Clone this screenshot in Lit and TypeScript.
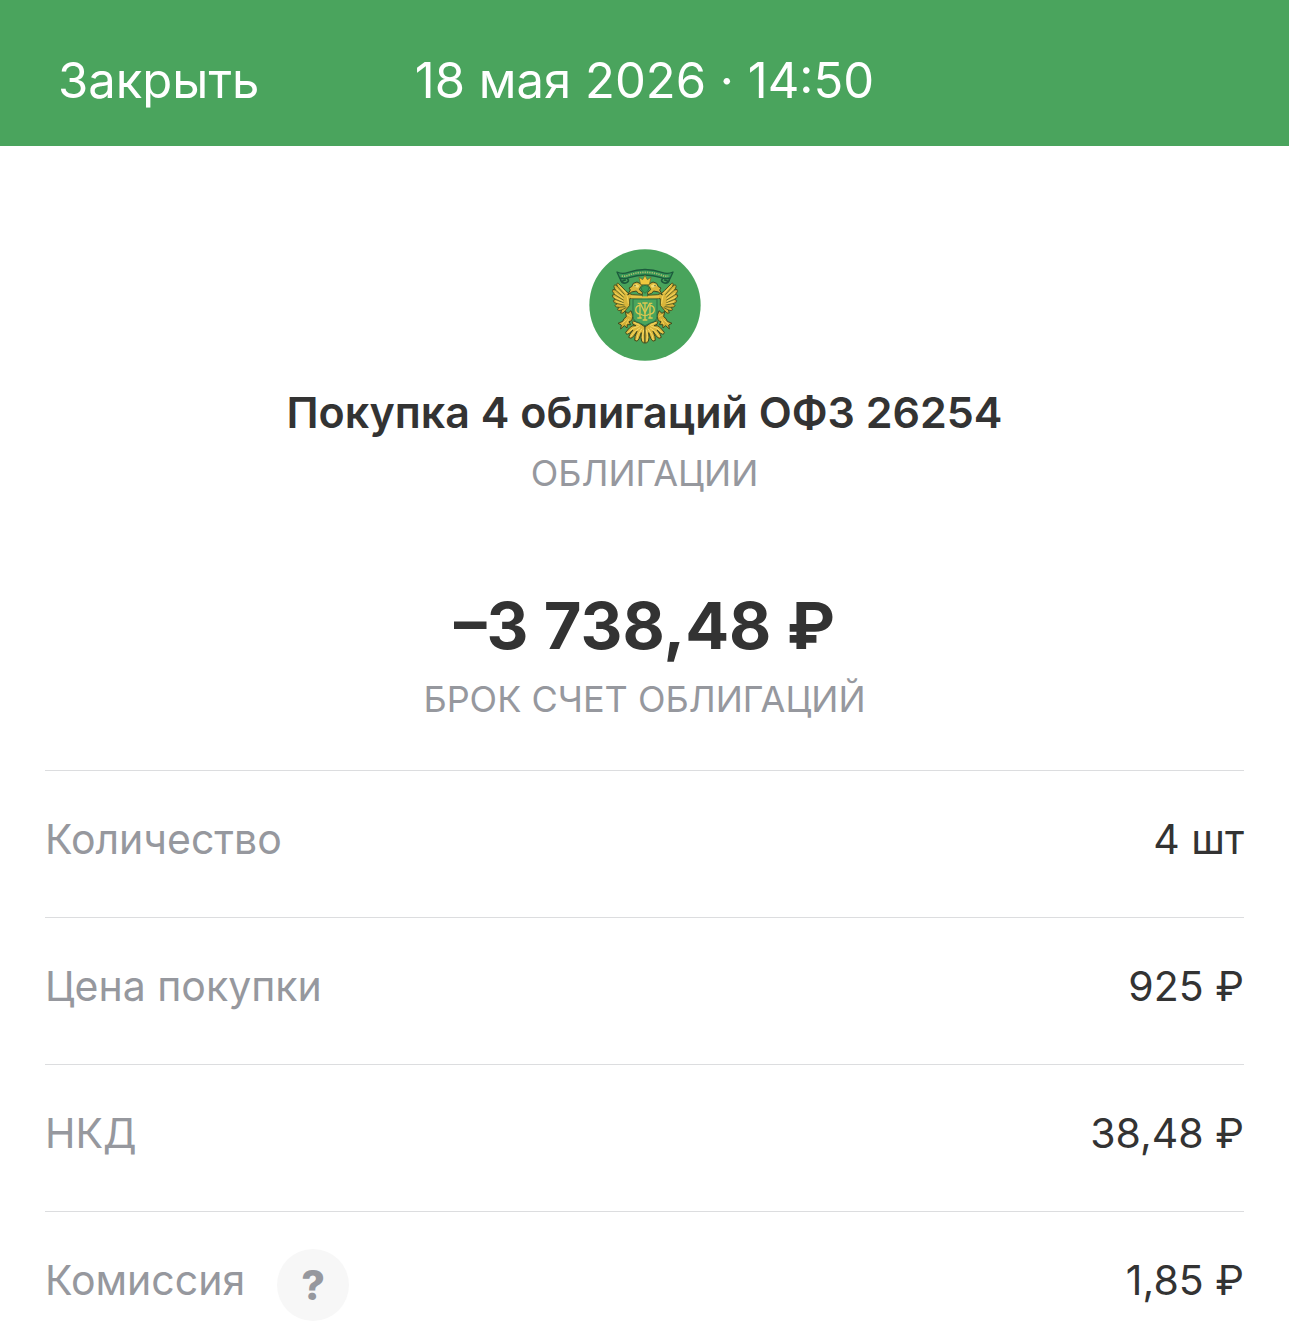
import { LitElement, html, css, svg } from 'lit';
import { customElement, property, state } from 'lit/decorators.js';

interface Detail {
  label: string;
  value: string;
  help?: boolean;
}

// left half of the eagle, mirrored for the right one
const half = svg`
  <path fill="#d9b53a" stroke="#4a5420" stroke-width="3" stroke-linejoin="round"
    d="M172 150 L142 148 Q130 146 122 136 L100 114 Q92 112 97 123 L90 118 Q83 121 91 134 L84 132 Q79 138 89 148 L82 149 Q80 156 91 162 L85 166 Q85 173 96 175 L90 181 Q92 187 102 186 L97 193 Q101 198 110 194 L107 203 Q114 207 121 196 L134 180 L134 160 L172 158 Z"/>
  <path fill="none" stroke="#4f5a22" stroke-width="2.5" stroke-linecap="round"
    d="M97 123 L118 147 M91 134 L115 155 M89 148 L115 164 M91 162 L115 172 M96 175 L117 179 M102 186 L120 184 M110 194 L123 187"/>
  <path fill="none" stroke="#f3d75f" stroke-width="3" stroke-linecap="round"
    d="M103 121 L123 144 M95 131 L116 150 M91 144 L114 159 M90 156 L113 167 M94 169 L115 175 M126 150 L130 174 M140 153 H170"/>
  <path fill="#dcb83c" stroke="#3e4a20" stroke-width="3" stroke-linejoin="round"
    d="M172 148 L160 144 L154 137 L140 140 L128 149 L136 134 L132 128 L140 124 L145 114 L156 110 L168 116 L174 126 L166 126 L163 133 L172 141 Z"/>
  <path fill="#f4dc70" d="M144 120 l10 -4 l9 5 l-4 6 l-9 -2 z"/>
  <circle cx="150" cy="121" r="2" fill="#2c4a2a"/>
  <path fill="#d3ae35" stroke="#3e4a20" stroke-width="3" stroke-linejoin="round"
    d="M121 198 L129 204 L138 196 L144 212 L140 226 L132 229 L137 238 L127 238 L126 248 L118 241 L107 251 L109 239 L99 234 L113 228 L117 220 L124 214 Z"/>
  <path fill="none" stroke="#f0d25a" stroke-width="3" stroke-linecap="round"
    d="M127 208 L136 213 M126 222 L110 236 M132 221 L124 236"/>
  <path fill="#d9b53a" stroke="#3e4a20" stroke-width="3" stroke-linejoin="round"
    d="M180 245 L163 233 L146 227 Q138 229 144 237 L153 241 Q140 239 133 248 L122 261 Q123 270 133 264 L144 254 Q132 268 131 276 Q137 283 145 274 L156 258 Q148 274 149 285 Q157 292 162 281 L169 262 Q166 278 170 288 Q175 294 180 293 Z"/>
  <path fill="none" stroke="#f5dc68" stroke-width="3" stroke-linecap="round"
    d="M148 232 L164 240 M160 243 Q144 244 128 262 M164 248 Q145 258 137 274 M170 251 Q156 268 155 283 M176 254 Q170 270 174 286"/>
`;

@customElement('bond-emblem')
export class BondEmblem extends LitElement {
  render() {
    return html`
      <svg viewBox="12 11 336 336" role="img" aria-label="ОФЗ">
        <circle cx="180" cy="179" r="167" fill="#49a45c" />
        <g>${half}</g>
        <g transform="translate(360 0) scale(-1 1)">${half}</g>
        <path fill="#359657" stroke="#1c5a3c" stroke-width="4" stroke-linejoin="round"
          d="M96 80 Q112 88 130 81 Q180 64 230 81 Q248 88 264 80 L256 98 Q242 103 228 97 Q180 81 132 97 Q118 103 104 98 Z" />
        <path fill="none" stroke="#1c5a3c" stroke-width="5" stroke-linecap="round"
          d="M106 100 Q108 115 122 113 Q135 108 128 101 M254 100 Q252 115 238 113 Q225 108 232 101 M113 107 L121 104 M247 107 L239 104" />
        <path fill="none" stroke="#a8bd6d" stroke-width="5" stroke-dasharray="4 3"
          d="M110 92 Q122 94 134 88 Q180 74 226 88 Q238 94 250 92" />
        <path fill="#f0c83e" stroke="#6b6424" stroke-width="2" stroke-linejoin="round"
          d="M167 118 L162 96 L173 103 L180 90 L187 103 L198 96 L193 118 Z" />
        <path fill="#3a9b55" stroke="#28603a" stroke-width="2"
          d="M167 124 L180 120 L193 124 L189 136 L180 144 L171 136 Z" />
        <path fill="#49a45c" stroke="#2b7044" stroke-width="3" stroke-linejoin="round"
          d="M144 161 H216 V213 Q216 228 198 232 L180 241 L162 232 Q144 228 144 213 Z" />
        <path stroke="#e3bf42" stroke-width="6" d="M138 156 H222" />
        <g fill="none" stroke="#dcc850" stroke-width="4">
          <path d="M180 172 V224 M172 173 H188 M173 224 H187" />
          <path d="M165 174 V218 M195 174 V218 M158 174 H168 M192 174 H202 M157 218 H170 M190 218 H203" />
          <path d="M165 181 C148 179 148 207 165 206 M195 181 C212 179 212 207 195 206" />
          <path d="M167 176 L180 202 L193 176 M167 206 Q180 216 193 206" />
        </g>
      </svg>
    `;
  }

  static styles = css`
    :host {
      display: block;
      width: 112px;
      height: 112px;
    }
    svg {
      display: block;
      width: 100%;
      height: 100%;
    }
  `;
}

@customElement('detail-row')
export class DetailRow extends LitElement {
  @property() label = '';
  @property() value = '';
  @property({ type: Boolean }) help = false;

  render() {
    return html`
      <dl class="row">
        <dt class="label">${this.label}</dt>
        ${this.help
          ? html`<dd class="hint"><button class="help" aria-label="${this.label}">?</button></dd>`
          : ''}
        <dd class="value">${this.value}</dd>
      </dl>
    `;
  }

  static styles = css`
    :host {
      display: block;
      border-top: 1px solid #dcdddf;
    }
    .row {
      display: flex;
      align-items: center;
      min-height: 146px;
      margin: 0;
      font-size: 41px;
      line-height: 52px;
    }
    .label {
      color: #96989e;
      padding-bottom: 10px;
    }
    .hint {
      margin: 0 0 0 32px;
    }
    .value {
      margin: 0 0 0 auto;
      padding-bottom: 10px;
      color: #333333;
    }
    .help {
      display: block;
      width: 72px;
      height: 72px;
      padding: 0;
      border: none;
      border-radius: 50%;
      background: #f7f7f7;
      color: #96989e;
      font-family: inherit;
      font-size: 41px;
      font-weight: 800;
      line-height: 72px;
      cursor: pointer;
    }
  `;
}

@customElement('app-root')
export class AppRoot extends LitElement {
  @state() private details: Detail[] = [
    { label: 'Количество', value: '4 шт' },
    { label: 'Цена покупки', value: '925 ₽' },
    { label: 'НКД', value: '38,48 ₽' },
    { label: 'Комиссия', value: '1,85 ₽', help: true },
  ];

  render() {
    return html`
      <header class="bar">
        <button class="close">Закрыть</button>
        <span class="date">18 мая 2026 · 14:50</span>
      </header>
      <main class="content">
        <section class="summary">
          <bond-emblem></bond-emblem>
          <h1 class="title">Покупка 4 облигаций ОФЗ 26254</h1>
          <p class="caption">ОБЛИГАЦИИ</p>
          <p class="amount">–3 738,48 ₽</p>
          <p class="caption">БРОК СЧЕТ ОБЛИГАЦИЙ</p>
        </section>
        ${this.details.map(
          (d) => html`<detail-row .label=${d.label} .value=${d.value} .help=${!!d.help}></detail-row>`
        )}
      </main>
    `;
  }

  static styles = css`
    :host {
      display: block;
      background: #ffffff;
      color: #333333;
      font-family: Inter, sans-serif;
    }
    .bar {
      display: grid;
      grid-template-columns: 1fr auto 1fr;
      align-items: center;
      padding: 51px 58px 35px;
      background: #4aa45d;
      color: #ffffff;
      font-size: 49px;
      line-height: 60px;
    }
    .close {
      justify-self: start;
      padding: 0;
      border: none;
      background: none;
      color: inherit;
      font: inherit;
      cursor: pointer;
    }
    .content {
      padding: 0 45px;
    }
    .summary {
      display: flex;
      flex-direction: column;
      align-items: center;
      padding: 103px 0 49px;
      text-align: center;
    }
    .title {
      margin: 24px 0 12px;
      font-size: 43px;
      font-weight: 600;
      line-height: 54px;
    }
    .caption {
      margin: 0;
      color: #96989e;
      font-size: 36px;
      line-height: 44px;
    }
    .amount {
      margin: 91px 0 11px;
      font-size: 65px;
      font-weight: 700;
      line-height: 80px;
    }
  `;
}
